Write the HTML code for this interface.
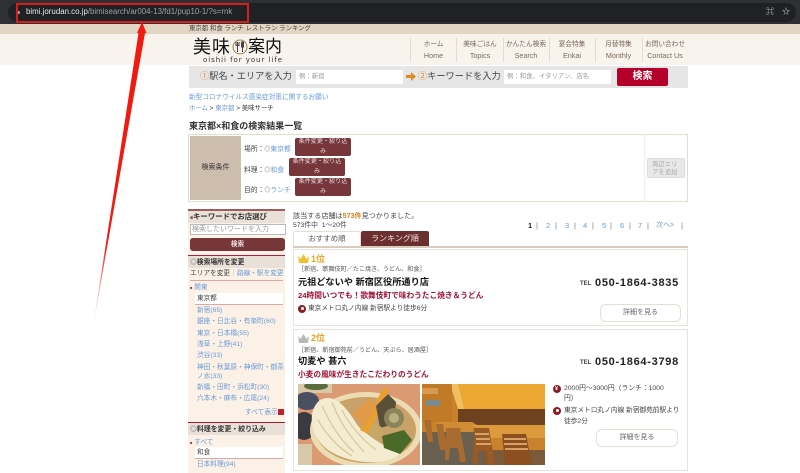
<!DOCTYPE html>
<html lang="ja"><head><meta charset="utf-8"><title>東京都×和食の検索結果一覧</title>
<style>
html,body{margin:0;padding:0;background:#fff}
#p{position:relative;width:800px;height:473px;overflow:hidden;background:#fff;font-family:"Liberation Sans","Noto Sans CJK JP",sans-serif;font-size:7px;color:#555;filter:blur(.25px)}
#p div,#p span.a{position:absolute}
.t{position:absolute;white-space:nowrap;line-height:12px;height:12px}
.c{text-align:center}
.l{color:#6a9ad6}
.b{font-weight:bold}
.btn{background:#76363a;border-radius:2px;color:#e8d8d8;text-align:center;font-size:6.1px;line-height:10px;box-sizing:border-box;padding:0 3.500px}
.btn span{display:block;margin-top:-1px}
.r{background:#fff;border:1px solid #e6dfd4;border-radius:6px;box-sizing:border-box;text-align:center;color:#666;font-size:7px;line-height:15px}
.pin{width:8px;height:8px;border-radius:50%;background:#8a1c24}
</style></head><body><div id="p">

<div style="left:0;top:0;width:800px;height:24px;background:#2f3034"></div>
<div style="left:8px;top:3px;width:788px;height:19px;background:#202124;border-radius:10px"></div>
<div class="t" style="left:26px;top:6px;font-size:7.9px;color:#9aa0a6"><span style="color:#e8eaed">bimi.jorudan.co.jp</span>/bimisearch/ar004-13/fd1/pup10-1/?s=rnk</div>
<div style="left:17px;top:11px;width:3px;height:3px;border-radius:50%;background:#aaa"></div>
<div class="t" style="left:766px;top:6px;font-size:8px;color:#c8c8c8">⌘</div>
<div class="t" style="left:782px;top:6px;font-size:8px;color:#ddd">☆</div>

<div style="left:0;top:24px;width:800px;height:10px;background:#e3d5c3"></div>
<div style="left:0;top:34px;width:800px;height:31px;background:#f8f3ec"></div>
<div class="t" style="left:189px;top:23px;font-size:6.4px;color:#444">東京都 和食 ランチ レストラン ランキング</div>

<div class="t" style="left:193px;top:38px;font-size:18px;letter-spacing:1px;line-height:18px;height:18px;color:#111">美味</div>
<svg style="position:absolute;left:232px;top:39px" width="16" height="16" viewBox="0 0 16 16"><circle cx="8" cy="8" r="7" fill="none" stroke="#a08050" stroke-width="1"/><path d="M5.500 3v10M10.500 3v10M4 3v3.500h3V3M9.500 3h2v5h-2z" fill="none" stroke="#444" stroke-width="1"/></svg>
<div class="t" style="left:248px;top:38px;font-size:17px;line-height:18px;height:18px;color:#111">案内</div>
<div class="t" style="left:203px;top:54px;font-size:7px;letter-spacing:.95px;color:#333;font-family:'DejaVu Sans',sans-serif">oishii for your life</div>

<div style="left:410px;top:38px;width:1px;height:24px;background:#e3dccf"></div>
<div style="left:456px;top:38px;width:1px;height:24px;background:#e3dccf"></div>
<div style="left:503px;top:38px;width:1px;height:24px;background:#e3dccf"></div>
<div style="left:549px;top:38px;width:1px;height:24px;background:#e3dccf"></div>
<div style="left:595px;top:38px;width:1px;height:24px;background:#e3dccf"></div>
<div style="left:642px;top:38px;width:1px;height:24px;background:#e3dccf"></div>
<div class="t c" style="left:411px;top:39px;width:45px;color:#7a6a5a;font-size:6.7px">ホーム</div><div class="t c" style="left:411px;top:50px;width:45px;color:#7a6a5a;font-size:7.2px">Home</div>
<div class="t c" style="left:457px;top:39px;width:46px;color:#7a6a5a;font-size:6.7px">美味ごはん</div><div class="t c" style="left:457px;top:50px;width:46px;color:#7a6a5a;font-size:7.2px">Topics</div>
<div class="t c" style="left:503px;top:39px;width:46px;color:#7a6a5a;font-size:6.7px">かんたん検索</div><div class="t c" style="left:503px;top:50px;width:46px;color:#7a6a5a;font-size:7.2px">Search</div>
<div class="t c" style="left:549px;top:39px;width:46px;color:#7a6a5a;font-size:6.7px">宴会特集</div><div class="t c" style="left:549px;top:50px;width:46px;color:#7a6a5a;font-size:7.2px">Enkai</div>
<div class="t c" style="left:595px;top:39px;width:47px;color:#7a6a5a;font-size:6.7px">月替特集</div><div class="t c" style="left:595px;top:50px;width:47px;color:#7a6a5a;font-size:7.2px">Monthly</div>
<div class="t c" style="left:642px;top:39px;width:46px;color:#7a6a5a;font-size:6.7px">お問い合わせ</div><div class="t c" style="left:642px;top:50px;width:46px;color:#7a6a5a;font-size:7.2px">Contact Us</div>

<div style="left:189px;top:66px;width:499px;height:22px;background:#e6e6e6"></div>
<div class="t" style="left:200px;top:70px;font-size:9.2px;color:#444"><span style="color:#e08a3c">①</span>駅名・エリアを入力</div>
<div style="left:296px;top:70px;width:107px;height:14px;background:#fff"></div>
<div class="t" style="left:299px;top:71px;font-size:6.4px;color:#999">例：新宿</div>
<svg style="position:absolute;left:406px;top:72px" width="10" height="9" viewBox="0 0 10 9"><path d="M0 3h5V0l5 4.500-5 4.500V6H0z" fill="#e08a20"/></svg>
<div class="t" style="left:418px;top:70px;font-size:9.2px;color:#444"><span style="color:#e08a3c">②</span>キーワードを入力</div>
<div style="left:504px;top:70px;width:107px;height:14px;background:#fff"></div>
<div class="t" style="left:507px;top:71px;font-size:6.4px;color:#999">例：和食、イタリアン、店名</div>
<div class="t c b" style="left:617px;top:68px;width:51px;height:18px;line-height:18px;background:#b5002c;border-radius:2px;color:#fff;font-size:10px">検索</div>

<div class="t l" style="left:189px;top:92px;font-size:6.65px">新型コロナウイルス感染症対策に関するお願い</div>
<div class="t" style="left:189px;top:102.500px;font-size:6.4px;color:#333"><span class="l">ホーム</span> &gt; <span class="l">東京都</span> &gt; 美味サーチ</div>
<div class="t b" style="left:189px;top:120px;font-size:9px;color:#333">東京都×和食の検索結果一覧</div>

<div style="left:188px;top:134px;width:500px;height:68px;box-sizing:border-box;border:1px solid #e8dccb"></div>
<div style="left:190px;top:136px;width:51px;height:64px;background:#cdbdac"></div>
<div class="t c" style="left:190px;top:162px;width:51px;font-size:7px;color:#333">検索条件</div>
<div style="left:644px;top:135px;width:1px;height:66px;background:#f6efe4"></div>
<div class="t" style="left:244px;top:144px;font-size:6.8px;color:#444">場所：<span style="color:#777;font-size:6px">◎</span><span class="l">東京都</span></div>
<div class="t" style="left:244px;top:165px;font-size:6.8px;color:#444">料理：<span style="color:#777;font-size:6px">◎</span><span class="l">和食</span></div>
<div class="t" style="left:244px;top:185px;font-size:6.8px;color:#444">目的：<span style="color:#777;font-size:6px">◎</span><span class="l">ランチ</span></div>
<div class="btn" style="left:295px;top:138px;width:56px;height:18px"><span>条件変更・絞り込み</span></div>
<div class="btn" style="left:289px;top:158px;width:56px;height:18px"><span>条件変更・絞り込み</span></div>
<div class="btn" style="left:295px;top:178px;width:56px;height:18px"><span>条件変更・絞り込み</span></div>
<div style="left:647px;top:158px;width:38px;height:20px;background:#e8e8e8;border:1px solid #ddd;border-radius:2px;box-sizing:border-box;color:#aaa;font-size:6.4px;line-height:7.5px;padding:2px 3px 0 4px">周辺エリアを追加</div>

<!-- sidebar -->
<div style="left:188px;top:209px;width:97px;height:264px;background:#fbf1e6"></div>
<div style="left:188px;top:209px;width:97px;height:2px;background:#a05a60"></div>
<div style="left:188px;top:211px;width:97px;height:12px;background:#e9e1d8"></div>
<div class="t b" style="left:190px;top:210.500px;font-size:7.4px;color:#333"><span style="font-size:5px;color:#8a3a3a">■</span>キーワードでお店選び</div>
<div style="left:190px;top:224px;width:96px;height:11px;background:#fff;border:1px solid #bbb;box-sizing:border-box"></div>
<div class="t" style="left:192px;top:224px;font-size:7px;color:#999">検索したいワードを入力</div>
<div class="t c b" style="left:190px;top:238px;width:95px;height:13px;line-height:13px;background:#76363a;border-radius:3px;color:#f0e0e0;font-size:6.6px">検索</div>
<div style="left:188px;top:255px;width:97px;height:1px;background:#b0203a"></div>
<div style="left:188px;top:256px;width:97px;height:12px;background:#e9e1d8"></div>
<div class="t b" style="left:190px;top:256.500px;font-size:6.8px;color:#333"><span style="color:#777">◎</span>検索場所を変更</div>
<div class="t" style="left:190px;top:268px;font-size:6.7px;color:#444">エリアを変更<span style="color:#aaa">｜</span><span class="l">路線・駅を変更</span></div>
<div style="left:190px;top:280px;width:93px;height:1px;background:#d8a8a8"></div>
<div class="t l" style="left:190px;top:281.500px;font-size:6.6px"><span style="color:#b03030;font-size:4px">■</span> 関東</div>
<div style="left:195px;top:293px;width:88px;height:11px;background:#fff;border-bottom:1px solid #d8a8a8"></div>
<div class="t" style="left:197px;top:293px;font-size:6.6px;color:#444">東京都</div>
<div class="t l" style="left:197px;top:305px;font-size:6.7px">新宿(65)</div>
<div class="t l" style="left:197px;top:316px;font-size:6.7px">銀座・日比谷・有楽町(60)</div>
<div class="t l" style="left:197px;top:327.500px;font-size:6.7px">東京・日本橋(55)</div>
<div class="t l" style="left:197px;top:339px;font-size:6.7px">浅草・上野(41)</div>
<div class="t l" style="left:197px;top:350px;font-size:6.7px">渋谷(33)</div>
<div class="t l" style="left:197px;top:362px;font-size:6.7px">神田・秋葉原・神保町・御茶</div>
<div class="t l" style="left:197px;top:371px;font-size:6.7px">ノ水(33)</div>
<div class="t l" style="left:197px;top:382px;font-size:6.7px">新橋・田町・浜松町(30)</div>
<div class="t l" style="left:197px;top:393px;font-size:6.7px">六本木・麻布・広尾(24)</div>
<div class="t l" style="left:245px;top:407px;font-size:6.7px">すべて表示</div>
<div style="left:278px;top:409px;width:6px;height:6px;background:#c02030"></div>
<div style="left:188px;top:422px;width:97px;height:1px;background:#a01c30"></div>
<div style="left:188px;top:423px;width:97px;height:12px;background:#e9e1d8"></div>
<div class="t b" style="left:190px;top:424px;font-size:6.9px;color:#333"><span style="color:#777">◎</span>料理を変更・絞り込み</div>
<div class="t l" style="left:190px;top:437px;font-size:6.6px"><span style="color:#b03030;font-size:4px">■</span> すべて</div>
<div style="left:195px;top:447px;width:88px;height:11px;background:#fff;border-bottom:1px solid #d8a8a8"></div>
<div class="t" style="left:197px;top:447px;font-size:6.6px;color:#444">和食</div>
<div class="t l" style="left:197px;top:459px;font-size:6.7px">日本料理(94)</div>

<!-- main -->
<div class="t" style="left:293px;top:210px;font-size:7.1px;color:#444">該当する店舗は<span class="b" style="color:#d8801c">573件</span>見つかりました。</div>
<div class="t" style="left:293px;top:220px;font-size:6.8px;color:#444">573件中&nbsp; 1〜20件</div>
<div class="t b" style="left:528px;top:220px;font-size:7.5px;color:#222">1</div>
<div class="t" style="left:536px;top:220px;font-size:7.5px;color:#777">|</div>
<div class="t l" style="left:546px;top:220px;font-size:7.5px">2</div><div class="t" style="left:555px;top:220px;font-size:7.5px;color:#777">|</div>
<div class="t l" style="left:565px;top:220px;font-size:7.5px">3</div><div class="t" style="left:574px;top:220px;font-size:7.5px;color:#777">|</div>
<div class="t l" style="left:583px;top:220px;font-size:7.5px">4</div><div class="t" style="left:592px;top:220px;font-size:7.5px;color:#777">|</div>
<div class="t l" style="left:602px;top:220px;font-size:7.5px">5</div><div class="t" style="left:610px;top:220px;font-size:7.5px;color:#777">|</div>
<div class="t l" style="left:620px;top:220px;font-size:7.5px">6</div><div class="t" style="left:629px;top:220px;font-size:7.5px;color:#777">|</div>
<div class="t l" style="left:638px;top:220px;font-size:7.5px">7</div><div class="t" style="left:647px;top:220px;font-size:7.5px;color:#777">|</div>
<div class="t l" style="left:656px;top:220px;font-size:7px">次へ&gt;</div><div class="t" style="left:681px;top:220px;font-size:7.5px;color:#777">|</div>

<div style="left:293px;top:231px;width:68px;height:16px;background:#fff;border:1px solid #e6dfd4;border-bottom:0;box-sizing:border-box;border-radius:3px 3px 0 0"></div>
<div class="t c" style="left:293px;top:233px;width:68px;font-size:7.4px;color:#555">おすすめ順</div>
<div class="t c" style="left:361px;top:231px;width:68px;height:16px;line-height:15px;background:#6b2f2f;border-radius:2px 2px 0 0;font-size:8px;color:#f0e2e2">ランキング順</div>
<div style="left:293px;top:246px;width:395px;height:1.500px;background:#d8ccbc"></div>

<div style="left:293px;top:249px;width:395px;height:77px;background:#fff;border:1px solid #e8e4dc;box-sizing:border-box"></div>
<svg style="position:absolute;left:297px;top:253px" width="13" height="11" viewBox="0 0 13 11"><path d="M1 3l2.500 3L6.500 1l3 5L12 3l-1 7H2z" fill="#f0c030"/></svg>
<div class="t b" style="left:311px;top:253px;font-size:9px;color:#eea020">1位</div>
<div class="t" style="left:298px;top:264px;font-size:6.1px;color:#555">［新宿、歌舞伎町／たこ焼き、うどん、和食］</div>
<div class="t b" style="left:298px;top:276px;font-size:9.2px;color:#111">元祖どないや 新宿区役所通り店</div>
<div class="t b" style="left:580px;top:278px;font-size:6px;color:#444">TEL</div>
<div class="t b" style="left:595px;top:277px;font-size:11px;letter-spacing:.72px;color:#222">050-1864-3835</div>
<div class="t b" style="left:298px;top:290px;font-size:7.7px;color:#a01030">24時間いつでも！歌舞伎町で味わうたこ焼き＆うどん</div>
<div class="pin" style="left:298px;top:305px"></div><div style="left:300.500px;top:307px;width:3px;height:3px;background:#fff;border-radius:50%"></div>
<div class="t" style="left:308px;top:303px;font-size:6.7px;color:#444">東京メトロ丸ノ内線 新宿駅より徒歩6分</div>
<div class="r" style="left:600px;top:304px;width:81px;height:18px">詳細を見る</div>

<div style="left:293px;top:329px;width:395px;height:142px;background:#fff;border:1px solid #e8e4dc;box-sizing:border-box"></div>
<svg style="position:absolute;left:297px;top:333px" width="13" height="11" viewBox="0 0 13 11"><path d="M1 3l2.500 3L6.500 1l3 5L12 3l-1 7H2z" fill="#b8b8b8"/></svg>
<div class="t b" style="left:311px;top:332px;font-size:9px;color:#eea020">2位</div>
<div class="t" style="left:298px;top:344.500px;font-size:6.1px;color:#555">［新宿、新宿御苑前／うどん、天ぷら、居酒屋］</div>
<div class="t b" style="left:298px;top:355px;font-size:9.2px;color:#111">切麦や 甚六</div>
<div class="t b" style="left:580px;top:357px;font-size:6px;color:#444">TEL</div>
<div class="t b" style="left:595px;top:356px;font-size:11px;letter-spacing:.72px;color:#222">050-1864-3798</div>
<div class="t b" style="left:298px;top:369px;font-size:7.7px;color:#a01030">小麦の風味が生きたこだわりのうどん</div>

<svg style="position:absolute;left:298px;top:384px" width="122" height="81" viewBox="0 0 122 81">
<rect width="122" height="81" fill="#dc9a72"/>
<rect x="0" y="0" width="34" height="9" fill="#d8c8a8"/>
<ellipse cx="18" cy="2" rx="12" ry="4" fill="#5a6a40"/>
<ellipse cx="9" cy="17" rx="12" ry="9" fill="#4a5060"/>
<ellipse cx="6" cy="42" rx="12" ry="14" fill="#3a3a40"/>
<rect x="0" y="60" width="14" height="21" fill="#d8c8a8"/>
<ellipse cx="68" cy="46" rx="56" ry="38" fill="#ecdcb4"/>
<ellipse cx="68" cy="46" rx="50" ry="33" fill="#c8a268"/>
<path d="M22 16C38 8 50 26 60 42c12 12 30 22 42 28C88 84 38 80 22 58 10 42 12 24 22 16z" fill="#f4ecd0"/>
<path d="M24 22c8 16 16 32 32 46M34 18c6 16 14 30 32 50M20 36c8 14 18 26 34 36M44 26c6 12 16 26 34 40" stroke="#d8ca9c" fill="none" stroke-width="1.3"/>
<path d="M62 46L86 3l5 3L70 50z" fill="#e8a030"/>
<path d="M54 30l18-16 6 8-12 20z" fill="#e09a48"/>
<path d="M78 22l12-12 8 8-2 22-14 4z" fill="#5a5038"/>
<circle cx="96" cy="34" r="10" fill="#8a8458"/><circle cx="96" cy="34" r="5" fill="#b8b080"/>
<path d="M84 52l22-6 8 10-12 14-16-6z" fill="#4a6a2a"/>
<ellipse cx="78" cy="47" rx="7" ry="6" fill="#c8a868"/>
</svg>
<svg style="position:absolute;left:422px;top:384px" width="123" height="81" viewBox="0 0 123 81">
<rect width="123" height="81" fill="#c8822c"/>
<path d="M32 0h91v25H38z" fill="#eca832"/>
<path d="M28 0h8l6 25H36z" fill="#f0c060"/>
<rect x="0" y="0" width="30" height="38" fill="#c07a28"/>
<rect x="0" y="4" width="16" height="6" fill="#d89a50"/>
<rect x="4" y="16" width="14" height="6" fill="#7a8a90"/>
<rect x="36" y="25" width="87" height="18" fill="#6e421e"/>
<path d="M0 48h60v33H0z" fill="#6a6050"/>
<path d="M60 66h63v15H60z" fill="#7a5a38"/>
<path d="M14 38h36l10 6v4H14z" fill="#d08c34"/>
<path d="M50 41h73v13l-58 0z" fill="#dc9a3c"/>
<path d="M2 36h7l2 22H6zM14 40h7l4 26h-7zM24 44h14l6 34h-6l-2-14H28l-1 12h-4z" fill="#a86c30"/>
<path d="M52 44h15l6 37h-7l-2-14H56v14h-5z" fill="#9a5a24"/>
<path d="M80 50h24l6 31H83z" fill="#8c5020"/>
<path d="M82 55h22M82 60h23M83 65h23" stroke="#e0ac70" stroke-width="1.8"/>
<path d="M53 50h14M54 55h14M54 60h15" stroke="#e0ac70" stroke-width="1.8"/>
</svg>

<div class="pin" style="left:553px;top:385px"></div><div class="t b" style="left:555px;top:383px;font-size:5.5px;color:#fff">¥</div>
<div class="t" style="left:564px;top:383px;font-size:6.8px;color:#444">2000円～3000円（ランチ：1000</div>
<div class="t" style="left:564px;top:393px;font-size:6.8px;color:#444">円）</div>
<div class="pin" style="left:553px;top:407px"></div><div style="left:555.500px;top:409px;width:3px;height:3px;background:#fff;border-radius:50%"></div>
<div class="t" style="left:564px;top:405px;font-size:6.7px;color:#444">東京メトロ丸ノ内線 新宿御苑前駅より</div>
<div class="t" style="left:564px;top:416px;font-size:6.7px;color:#444">徒歩2分</div>
<div class="r" style="left:596px;top:429px;width:82px;height:18px">詳細を見る</div>

<!-- annotation -->
<div style="left:16px;top:3px;width:233px;height:20px;box-sizing:border-box;border:2px solid #d81e1a"></div>
<svg style="position:absolute;left:0;top:0" width="800" height="473">
<defs><linearGradient id="g" x1="0" y1="0" x2="0" y2="1"><stop offset="0" stop-color="#f01a10"/><stop offset=".72" stop-color="#f01a10"/><stop offset="1" stop-color="#f01a10" stop-opacity="0"/></linearGradient></defs>
<path d="M142 22L146.500 33 145 33 93 327 138.500 33 137 33z" fill="url(#g)"/>
</svg>
</div></body></html>
